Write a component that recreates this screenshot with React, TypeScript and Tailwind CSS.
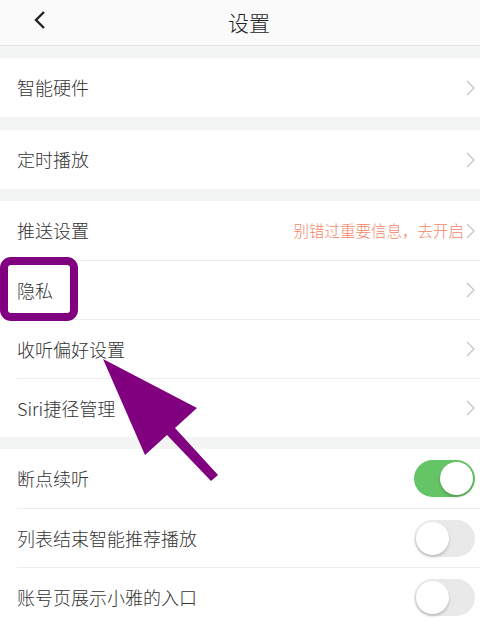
import * as React from 'react'

const font = { fontFamily: '"Noto Sans CJK SC", "Noto Sans", sans-serif' }

function Chevron() {
  return (
    <svg width="9" height="16" viewBox="0 0 9 16" className="shrink-0">
      <path d="M1 1l7 7-7 7" fill="none" stroke="#c5c5c9" strokeWidth="1.3" />
    </svg>
  )
}

function Toggle({ on }: { on: boolean }) {
  return (
    <div
      className={`flex h-[37px] w-[61px] items-center rounded-full p-[2px] ${
        on ? 'justify-end bg-[#65c466]' : 'justify-start bg-[#e9e9ea]'
      }`}
    >
      <div className="h-[33px] w-[33px] rounded-full bg-white shadow-[0_2px_3px_rgba(0,0,0,0.2)]" />
    </div>
  )
}

interface RowProps {
  label: string
  hint?: string
  toggle?: boolean
  first?: boolean
}

function Row({ label, hint, toggle, first }: RowProps) {
  return (
    <div className="h-[59px] bg-white pl-[17px]">
      <div
        className={`flex h-full items-center pr-[5px] ${first ? '' : 'border-t border-[#ececec]'}`}
      >
        <span className="flex-1 text-[18px] font-light text-[#333]">{label}</span>
        {toggle === undefined ? (
          <div className="flex items-center gap-[2px]">
            {hint && <span className="text-[15.5px] font-light text-[#f2876b]">{hint}</span>}
            <Chevron />
          </div>
        ) : (
          <Toggle on={toggle} />
        )}
      </div>
    </div>
  )
}

export default function App() {
  return (
    <div className="relative h-[623px] w-[480px] overflow-hidden bg-[#f3f4f4]" style={font}>
      <header className="relative flex h-[46px] items-center justify-center border-b border-[#e4e4e4] bg-[#fafafa] pl-[18px]">
        <svg width="12" height="20" viewBox="0 0 12 20" className="absolute left-[34px] top-[10px]">
          <path d="M10 2L2 10l8 8" fill="none" stroke="#222" strokeWidth="2.4" />
        </svg>
        <span className="text-[21px] font-light text-[#222]">设置</span>
      </header>

      <div className="mt-[12px]">
        <Row label="智能硬件" first />
      </div>
      <div className="mt-[13px]">
        <Row label="定时播放" first />
      </div>
      <div className="mt-[12px]">
        <Row label="推送设置" hint="别错过重要信息，去开启" first />
        <Row label="隐私" />
        <Row label="收听偏好设置" />
        <Row label="Siri捷径管理" />
      </div>
      <div className="mt-[12px]">
        <Row label="断点续听" toggle first />
        <Row label="列表结束智能推荐播放" toggle={false} />
        <Row label="账号页展示小雅的入口" toggle={false} />
      </div>

      {/* annotation overlay */}
      <div className="absolute left-0 top-[257px] h-[64px] w-[78px] rounded-[11px] border-[8px] border-[#800080]" />
      <svg className="pointer-events-none absolute left-0 top-0" width="480" height="623">
        <polygon
          points="103,359 197,408 175,428 218,475 211,481 167,435 145,455"
          fill="#800080"
        />
      </svg>
    </div>
  )
}
